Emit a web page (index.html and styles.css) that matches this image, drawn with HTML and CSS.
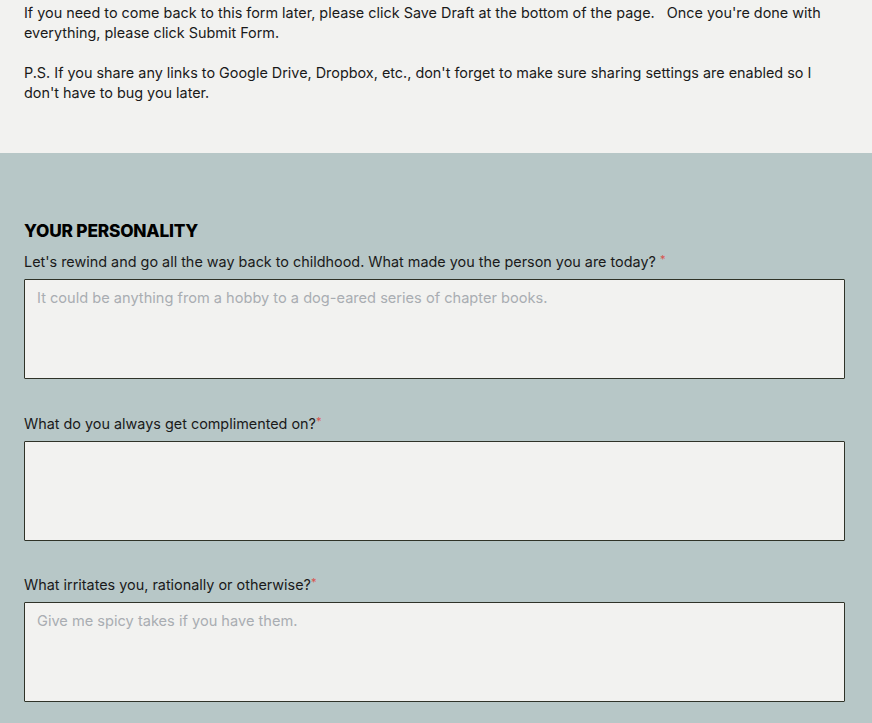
FILE: index.html
```html
<!DOCTYPE html>
<html>
<head>
<meta charset="utf-8">
<link rel="stylesheet" href="styles.css">
</head>
<body>
<section class="intro">
  <p>If you need to come back to this form later, please click Save Draft at the bottom of the page.&nbsp;&nbsp; Once you're done with everything, please click Submit Form.</p>
  <p>P.S. If you share any links to Google Drive, Dropbox, etc., don't forget to make sure sharing settings are enabled so I don't have to bug you later.</p>
</section>
<section class="form">
  <h2 class="heading">YOUR PERSONALITY</h2>
  <div class="field">
    <label class="label">Let's rewind and go all the way back to childhood. What made you the person you are today? <span class="req">*</span></label>
    <textarea class="input" placeholder="It could be anything from a hobby to a dog-eared series of chapter books."></textarea>
  </div>
  <div class="field">
    <label class="label">What do you always get complimented on?<span class="req">*</span></label>
    <textarea class="input"></textarea>
  </div>
  <div class="field">
    <label class="label">What irritates you, rationally or otherwise?<span class="req">*</span></label>
    <textarea class="input" placeholder="Give me spicy takes if you have them."></textarea>
  </div>
</section>
</body>
</html>
```
FILE: styles.css
```css
* { box-sizing: border-box; }
html, body { margin: 0; padding: 0; }
body {
  font-family: Inter, "Liberation Sans", sans-serif;
  font-size: 14.4px;
  line-height: 20px;
  color: #1a1a1a;
  background: #b7c7c7;
  width: 872px;
  height: 723px;
  overflow: hidden;
}
.intro {
  background: #f2f2f0;
  padding: 3px 24px 51px;
  height: 153px;
}
.intro p { margin: 0 0 20px; }
.intro p:last-child { margin-bottom: 0; }
.form {
  padding: 66px 27px 0 24px;
}
.heading {
  margin: 0 0 9px;
  font-size: 17.3px;
  line-height: 24px;
  font-weight: 800;
  color: #000;
  letter-spacing: -0.2px;
}
.field { display: flex; flex-direction: column; margin-bottom: 34.5px; }
.label { display: block; margin-bottom: 7px; }
.req { color: #d9534f; font-size: 11px; vertical-align: top; line-height: 14px; }
.input {
  display: block;
  width: 100%;
  height: 100px;
  background: #f2f2f0;
  border: 1px solid #2f3328;
  border-radius: 1px;
  padding: 7.5px 12px;
  font-family: inherit;
  font-size: 14.6px;
  line-height: 20px;
  resize: none;
  outline: none;
}
.input::placeholder { color: #a9adb2; }
```
